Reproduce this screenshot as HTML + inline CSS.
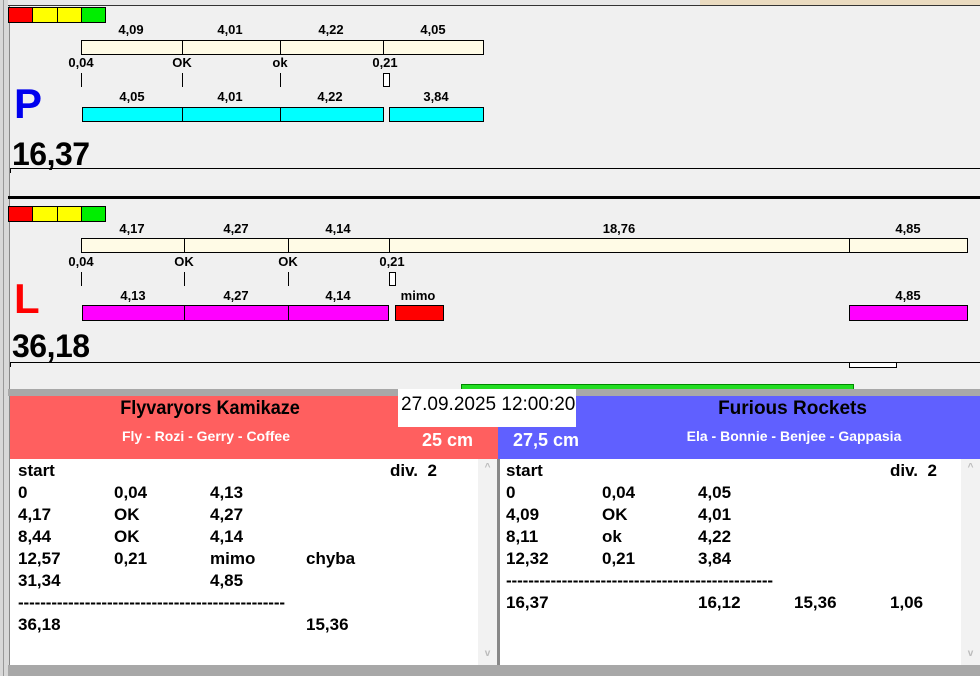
<!DOCTYPE html>
<html><head><meta charset="utf-8"><style>
*{margin:0;padding:0;box-sizing:border-box}
body{width:980px;height:676px;overflow:hidden;background:#f0f0f0;position:relative;font-family:"Liberation Sans",Arial,sans-serif;font-weight:bold;color:#000}
div{position:absolute}
.b{border:1px solid #000}
.l{font-size:13px;transform:translateX(-50%);white-space:nowrap;line-height:14px}
.t{width:1px;background:#000}
.r{font-size:17px;line-height:22px;white-space:nowrap}
.d{font-size:17px;line-height:22px;white-space:nowrap;letter-spacing:-0.1px}
</style></head><body>
<div style="left:0;top:0;width:10px;height:676px;background:#d8d8d8;border-right:1px solid #888"></div>
<div style="left:3px;top:0;width:1px;height:676px;background:#999"></div>
<div style="left:8px;top:0;width:972px;height:6px;background:#e8e8e8"></div>
<div style="left:700px;top:0;width:280px;height:5px;background:#eadbc0"></div>
<div style="left:8px;top:5px;width:972px;height:1px;background:#333"></div>

<!-- P -->
<div class="b" style="left:8px;top:7px;width:26px;height:16px;background:#f00"></div>
<div class="b" style="left:32px;top:7px;width:26px;height:16px;background:#ff0"></div>
<div class="b" style="left:57px;top:7px;width:26px;height:16px;background:#ff0"></div>
<div class="b" style="left:81px;top:7px;width:25px;height:16px;background:#0e0"></div>
<div class="l" style="left:131px;top:23px">4,09</div>
<div class="l" style="left:230px;top:23px">4,01</div>
<div class="l" style="left:331px;top:23px">4,22</div>
<div class="l" style="left:433px;top:23px">4,05</div>
<div class="b" style="left:81px;top:40px;width:403px;height:15px;background:#fffbe6"></div>
<div class="t" style="left:182px;top:40px;height:15px"></div>
<div class="t" style="left:280px;top:40px;height:15px"></div>
<div class="t" style="left:383px;top:40px;height:15px"></div>
<div class="l" style="left:81px;top:56px">0,04</div>
<div class="l" style="left:182px;top:56px">OK</div>
<div class="l" style="left:280px;top:56px">ok</div>
<div class="l" style="left:385px;top:56px">0,21</div>
<div class="t" style="left:81px;top:73px;height:14px"></div>
<div class="t" style="left:182px;top:73px;height:14px"></div>
<div class="t" style="left:280px;top:73px;height:14px"></div>
<div class="b" style="left:383px;top:73px;width:7px;height:14px;background:#fff"></div>
<div style="left:14px;top:80px;font-size:42px;color:#0000ee;line-height:48px">P</div>
<div class="l" style="left:132px;top:90px">4,05</div>
<div class="l" style="left:230px;top:90px">4,01</div>
<div class="l" style="left:330px;top:90px">4,22</div>
<div class="l" style="left:436px;top:90px">3,84</div>
<div class="b" style="left:82px;top:107px;width:302px;height:15px;background:#0ff"></div>
<div class="t" style="left:182px;top:107px;height:15px"></div>
<div class="t" style="left:280px;top:107px;height:15px"></div>
<div class="b" style="left:389px;top:107px;width:95px;height:15px;background:#0ff"></div>
<div style="left:12px;top:137px;font-size:32px;line-height:34px;letter-spacing:-0.5px">16,37</div>
<div style="left:10px;top:168px;width:970px;height:1px;background:#000"></div>
<div style="left:10px;top:168px;width:1px;height:5px;background:#000"></div>
<div style="left:8px;top:196px;width:972px;height:3px;background:#000"></div>

<!-- L -->
<div class="b" style="left:8px;top:206px;width:26px;height:16px;background:#f00"></div>
<div class="b" style="left:32px;top:206px;width:26px;height:16px;background:#ff0"></div>
<div class="b" style="left:57px;top:206px;width:26px;height:16px;background:#ff0"></div>
<div class="b" style="left:81px;top:206px;width:25px;height:16px;background:#0e0"></div>
<div class="l" style="left:132px;top:222px">4,17</div>
<div class="l" style="left:236px;top:222px">4,27</div>
<div class="l" style="left:338px;top:222px">4,14</div>
<div class="l" style="left:619px;top:222px">18,76</div>
<div class="l" style="left:908px;top:222px">4,85</div>
<div class="b" style="left:81px;top:238px;width:887px;height:15px;background:#fffbe6"></div>
<div class="t" style="left:184px;top:238px;height:15px"></div>
<div class="t" style="left:288px;top:238px;height:15px"></div>
<div class="t" style="left:389px;top:238px;height:15px"></div>
<div class="t" style="left:849px;top:238px;height:15px"></div>
<div class="l" style="left:81px;top:255px">0,04</div>
<div class="l" style="left:184px;top:255px">OK</div>
<div class="l" style="left:288px;top:255px">OK</div>
<div class="l" style="left:392px;top:255px">0,21</div>
<div class="t" style="left:81px;top:272px;height:14px"></div>
<div class="t" style="left:184px;top:272px;height:14px"></div>
<div class="t" style="left:288px;top:272px;height:14px"></div>
<div class="b" style="left:389px;top:272px;width:7px;height:14px;background:#fff"></div>
<div style="left:14px;top:275px;font-size:42px;color:#f00;line-height:48px">L</div>
<div class="l" style="left:133px;top:289px">4,13</div>
<div class="l" style="left:236px;top:289px">4,27</div>
<div class="l" style="left:338px;top:289px">4,14</div>
<div class="l" style="left:418px;top:289px">mimo</div>
<div class="l" style="left:908px;top:289px">4,85</div>
<div class="b" style="left:82px;top:305px;width:307px;height:16px;background:#f0f"></div>
<div class="t" style="left:184px;top:305px;height:16px"></div>
<div class="t" style="left:288px;top:305px;height:16px"></div>
<div class="b" style="left:395px;top:305px;width:49px;height:16px;background:#f00"></div>
<div class="b" style="left:849px;top:305px;width:119px;height:16px;background:#f0f"></div>
<div style="left:12px;top:329px;font-size:32px;line-height:34px;letter-spacing:-0.5px">36,18</div>
<div style="left:10px;top:362px;width:970px;height:1px;background:#000"></div>
<div style="left:10px;top:362px;width:1px;height:5px;background:#000"></div>
<div class="b" style="left:849px;top:362px;width:48px;height:6px;background:#fff"></div>
<div style="left:461px;top:384px;width:393px;height:6px;background:#22dd22;border:1px solid #080"></div>
<div style="left:8px;top:389px;width:972px;height:7px;background:#a8a8a8"></div>

<!-- bottom -->
<div style="left:10px;top:396px;width:488px;height:63px;background:#ff5f5f"></div>
<div style="left:498px;top:396px;width:482px;height:63px;background:#6060ff"></div>
<div style="left:10px;top:397px;width:400px;text-align:center;font-size:19px;line-height:24px;transform:scaleX(0.95)">Flyvaryors Kamikaze</div>
<div style="left:600px;top:397px;width:385px;text-align:center;font-size:19px;line-height:24px">Furious Rockets</div>
<div style="left:398px;top:389px;width:178px;height:38px;background:#fff"></div>
<div style="left:401px;top:393px;font-size:19px;font-weight:normal;line-height:24px;white-space:nowrap">27.09.2025 12:00:20</div>
<div style="left:10px;top:427px;width:392px;text-align:center;color:#fff;font-size:14px;line-height:18px">Fly - Rozi - Gerry - Coffee</div>
<div style="left:600px;top:427px;width:388px;text-align:center;color:#fff;font-size:14px;line-height:18px">Ela - Bonnie - Benjee - Gappasia</div>
<div style="left:422px;top:429px;color:#fff;font-size:18px;line-height:22px">25 cm</div>
<div style="left:513px;top:429px;color:#fff;font-size:18px;line-height:22px">27,5 cm</div>

<div style="left:10px;top:459px;width:487px;height:206px;background:#fff"></div>
<div style="left:478px;top:459px;width:19px;height:206px;background:#f2f2f2;color:#bbb;font-size:10px;text-align:center;line-height:14px;padding-top:2px">^<div style="left:0;top:188px;width:19px">v</div></div>
<div style="left:497px;top:459px;width:3px;height:206px;background:#888"></div>
<div style="left:500px;top:459px;width:480px;height:206px;background:#fff"></div>
<div style="left:961px;top:459px;width:19px;height:206px;background:#f2f2f2;color:#bbb;font-size:10px;text-align:center;line-height:14px;padding-top:2px">^<div style="left:0;top:188px;width:19px">v</div></div>
<div style="left:8px;top:665px;width:972px;height:11px;background:#a8a8a8"></div>

<div class="r" style="left:18px;top:460px">start</div>
<div class="r" style="left:390px;top:460px">div.&nbsp; 2</div>
<div class="r" style="left:18px;top:482px">0</div><div class="r" style="left:114px;top:482px">0,04</div><div class="r" style="left:210px;top:482px">4,13</div>
<div class="r" style="left:18px;top:504px">4,17</div><div class="r" style="left:114px;top:504px">OK</div><div class="r" style="left:210px;top:504px">4,27</div>
<div class="r" style="left:18px;top:526px">8,44</div><div class="r" style="left:114px;top:526px">OK</div><div class="r" style="left:210px;top:526px">4,14</div>
<div class="r" style="left:18px;top:548px">12,57</div><div class="r" style="left:114px;top:548px">0,21</div><div class="r" style="left:210px;top:548px">mimo</div><div class="r" style="left:306px;top:548px">chyba</div>
<div class="r" style="left:18px;top:570px">31,34</div><div class="r" style="left:210px;top:570px">4,85</div>
<div class="d" style="left:18px;top:592px;width:270px;overflow:hidden">------------------------------------------------</div>
<div class="r" style="left:18px;top:614px">36,18</div><div class="r" style="left:306px;top:614px">15,36</div>

<div class="r" style="left:506px;top:460px">start</div>
<div class="r" style="left:890px;top:460px">div.&nbsp; 2</div>
<div class="r" style="left:506px;top:482px">0</div><div class="r" style="left:602px;top:482px">0,04</div><div class="r" style="left:698px;top:482px">4,05</div>
<div class="r" style="left:506px;top:504px">4,09</div><div class="r" style="left:602px;top:504px">OK</div><div class="r" style="left:698px;top:504px">4,01</div>
<div class="r" style="left:506px;top:526px">8,11</div><div class="r" style="left:602px;top:526px">ok</div><div class="r" style="left:698px;top:526px">4,22</div>
<div class="r" style="left:506px;top:548px">12,32</div><div class="r" style="left:602px;top:548px">0,21</div><div class="r" style="left:698px;top:548px">3,84</div>
<div class="d" style="left:506px;top:570px;width:270px;overflow:hidden">------------------------------------------------</div>
<div class="r" style="left:506px;top:592px">16,37</div><div class="r" style="left:698px;top:592px">16,12</div><div class="r" style="left:794px;top:592px">15,36</div><div class="r" style="left:890px;top:592px">1,06</div>
</body></html>
